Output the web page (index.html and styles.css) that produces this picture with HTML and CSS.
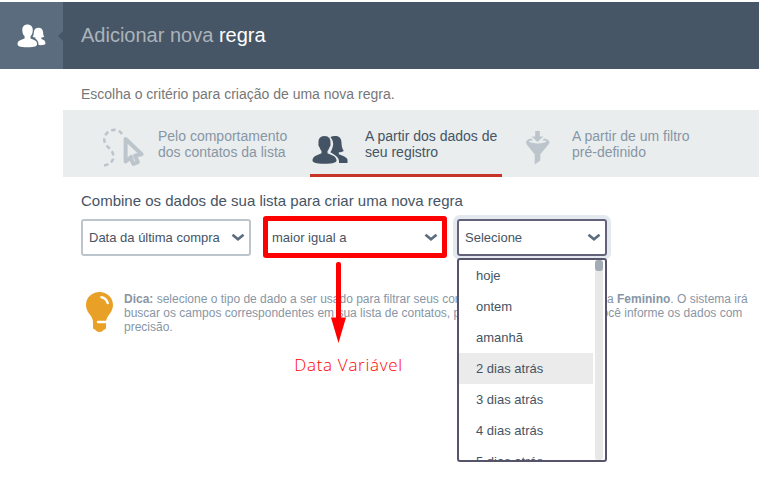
FILE: index.html
```html
<!DOCTYPE html>
<html lang="pt-BR">
<head>
    <meta charset="UTF-8">
    <meta name="viewport" content="width=device-width, initial-scale=1.0">
    <title>Adicionar nova regra</title>
    <link rel="stylesheet" href="styles.css">
</head>
<body>

    <header class="header">
        <div class="header-icon">
            <svg width="29" height="24" viewBox="0 0 29 24" fill="#fff">
                <path d="M21.500 3.800c-2.500 0-4.500 1.400-4.700 4.700-.1 2-.6 3.500-1.200 4.600l2.800.5v1.200c2.200 1.300 3 3 3.200 6.300 4.500.2 6.900-.5 6.900-1.600-.2-2.700-1.300-3.300-4.100-4.400v-1.600c1.300 0 2.200-.2 3-.7-1-1.100-1.200-2.300-1.300-4.500-.2-3.100-2.100-4.500-4.600-4.500z"/>
                <path stroke="#5a6c7d" stroke-width="1.200" paint-order="stroke" d="M10.500 .500C7.200 .500 5.300 2.700 5.300 5.900c0 3 .9 5 2.300 6.400v2.200C4 15.800.700 16.500.500 20c0 2 2 3.300 9.800 3.300s9.800-1.300 9.800-3.300c-.2-3.500-3-4.200-6.600-5.500v-2.200C14.900 10.900 15.800 8.900 15.800 5.900c0-3.200-2.100-5.400-5.300-5.400z"/>
            </svg>
        </div>
        <h1>Adicionar nova <span>regra</span></h1>
    </header>

    <p class="intro">Escolha o critério para criação de uma nova regra.</p>

    <!-- Criteria tabs -->
    <nav class="tabs">
        <a class="tab">
            <svg class="icon-cursor" width="42" height="40" viewBox="0 0 42 40" fill="none" stroke="#bdc5cc">
                <path stroke-width="2.600" stroke-dasharray="4.500 3.200" d="M19 6C15.500 .500 7.500 .700 3.600 5.500-.500 10.500 1.300 15.500 5 19c4 3.500 6.200 7 5.200 11.500-1 4-4.500 6.500-9.700 7"/>
                <path stroke-width="4" stroke-linejoin="round" d="M22.600 11v22.500l5-3.800 2.800 6.300 4.500-1.900-2.900-6.500 6.600-1.400z"/>
                <path stroke-width="2.400" d="M27.800 27l1.800 4"/>
            </svg>
            <span>Pelo comportamento<br>dos contatos da lista</span>
        </a>
        <a class="tab active">
            <svg class="icon-people" width="36" height="28" viewBox="0 0 36 28" fill="#455464">
                <path d="M18.500 1.200c1.500-1 3-1.200 5-1.200 4 0 5.800 2.500 6 6.500.1 4 .7 6 2.300 8.500-1.400 1-3 1.300-5 1.300v2c4.200 1.600 8.700 3.200 8.700 5.700v3h-8.500c.7-4.200-2.200-7-6.500-9.500-1.300-.7-2-1-2-1.500 1.300-1.500 1.600-3.400 2.300-5.500.9-2.500.3-6.500-2.300-9.300z"/>
                <path stroke="#e9edee" stroke-width="1.800" paint-order="stroke" d="M12.500 0C8 0 6.200 3 6.500 7c.1.900-.2 1.300 0 2.400.2 1 .8 1.200 1.100 2.200.4 1.600 1.200 2.600 1.900 3.300v2.300C5.500 19 1 20 .500 24c-.2 2.600 3 3.700 12 3.700s12.300-1.100 12-3.700C24 20 19.500 19 15.500 17.200v-2.300c.7-.7 1.500-1.700 1.900-3.300.3-1 .9-1.200 1.100-2.200.2-1.100-.1-1.500 0-2.400.3-4-1.500-7-6-7z"/>
            </svg>
            <span>A partir dos dados de<br>seu registro</span>
        </a>
        <a class="tab">
            <svg class="icon-funnel" width="24" height="34" viewBox="0 0 24 34" fill="#bdc5cc">
                <path d="M9.200 0h4.600v5.400h3.500L11.500 11 5.700 5.400h3.500z"/>
                <path d="M5.400 7.500C2.200 8.200 0 9.400 0 11c0 1.500 1.500 3.500 3.500 6l5.200 6.200v10.300l5.600-3.900v-6.400l5.200-6.200c2-2.500 4-4.500 4-6 0-1.600-2.200-2.800-5.400-3.500l-1.800 1.700c2.300.3 4 .8 4.400 1.400-1 1-4.500 1.800-9 1.800s-8-.8-9-1.800c.4-.6 2.100-1.100 4.400-1.400z"/>
            </svg>
            <span>A partir de um filtro<br>pré-definido</span>
        </a>
    </nav>

    <main class="content">
        <h2>Combine os dados de sua lista para criar uma nova regra</h2>

        <div class="fields">
            <div class="select">
                <span>Data da última compra</span>
                <svg class="chevron" width="14" height="9" viewBox="0 0 14 9"><path d="M1.500 1.800L7 6.300l5.500-4.500"/></svg>
            </div>
            <div class="select marked">
                <span>maior igual a</span>
                <svg class="chevron" width="14" height="9" viewBox="0 0 14 9"><path d="M1.500 1.800L7 6.300l5.500-4.500"/></svg>
                <div class="note">
                    <svg width="17" height="82" viewBox="0 0 17 82" fill="#f00">
                        <rect x="6" y="0" width="5" height="60" rx="2"/>
                        <path d="M1 55.500h15L8.500 81z"/>
                    </svg>
                    <span>Data Variável</span>
                </div>
            </div>
            <div class="select focused">
                <span>Selecione</span>
                <svg class="chevron" width="14" height="9" viewBox="0 0 14 9"><path d="M1.500 1.800L7 6.300l5.500-4.500"/></svg>
                <div class="dropdown">
                    <ul>
                        <li>hoje</li>
                        <li>ontem</li>
                        <li>amanhã</li>
                        <li class="hover">2 dias atrás</li>
                        <li>3 dias atrás</li>
                        <li>4 dias atrás</li>
                        <li>5 dias atrás</li>
                    </ul>
                    <div class="scrollbar"><div class="thumb"></div></div>
                </div>
            </div>
        </div>

        <div class="tip">
            <svg width="28" height="41" viewBox="0 0 28 41">
                <path fill="#e8a026" d="M13.500 0C6 0 0 5.500 0 13c0 4 1.700 6.800 3.800 9.500C6 25.500 7 27.500 7 31v4.500c0 1.500 1 2 2.300 2.300C10.300 39.500 11.700 40 13.500 40s3.200-.5 4.200-2.200c1.300-.3 2.300-.8 2.300-2.300V31c0-3.500 1-5.500 3.200-8.500C25.300 19.800 27 17 27 13 27 5.500 21 0 13.500 0z"/>
                <path fill="none" stroke="#fff" stroke-width="2.500" stroke-linecap="round" d="M15.500 5.200c3.200.6 5.300 2.700 6.200 5.800M12 30h8.500"/>
            </svg>
            <p><b>Dica:</b> selecione o tipo de dado a ser usado para filtrar seus contatos. Exemplo: Sexo igual a <b>Feminino</b>. O sistema irá<br>buscar os campos correspondentes em sua lista de contatos, por isso, é importante que você informe os dados com<br>precisão.</p>
        </div>
    </main>

</body>
</html>
```
FILE: styles.css
```css
body {
    margin: 0;
    padding-top: 2px;
    min-height: 498px;
    box-sizing: border-box;
    background-color: #fff;
    font-family: "Liberation Sans", Arial, sans-serif;
    color: #455464;
}

h1, h2, p, ul {
    margin: 0;
    padding: 0;
    font-weight: normal;
}

.header {
    display: flex;
    height: 67px;
    background-color: #475666;
}

.header-icon {
    position: relative;
    display: flex;
    align-items: center;
    justify-content: center;
    width: 63px;
    background-color: #5a6c7d;
}

.header-icon::after {
    content: "";
    position: absolute;
    right: 0;
    top: 29px;
    border: 5px solid transparent;
    border-left: none;
    border-right-color: #475666;
}

.header h1 {
    padding-left: 18px;
    font-size: 20px;
    line-height: 66px;
    color: #abb3ba;
}

.header h1 span {
    color: #fff;
}

.intro {
    padding: 16px 0 0 81px;
    height: 25px;
    font-size: 14px;
    line-height: 18px;
    color: #777;
}

/* Tabs */
.tabs {
    display: grid;
    grid-template-columns: 192px 192px 1fr;
    column-gap: 15px;
    height: 67px;
    margin-left: 63px;
    padding-left: 40px;
    background-color: #e9edee;
    box-sizing: border-box;
}

.tab {
    display: grid;
    grid-template-columns: 55px 1fr;
    align-items: start;
    padding-top: 18px;
    height: 67px;
    box-sizing: border-box;
    font-size: 14px;
    line-height: 16px;
    color: #8896a5;
    white-space: nowrap;
}

.tab.active {
    border-bottom: 3px solid #c63527;
    color: #455464;
}

.icon-people {
    margin: 8px 0 0 2px;
}

.icon-funnel {
    margin: 3px 0 0 9px;
}

.content {
    padding-left: 81px;
}

.content h2 {
    padding-top: 15px;
    height: 27px;
    font-size: 15px;
    line-height: 18px;
}

/* Fields */
.fields {
    display: flex;
}

.select {
    position: relative;
    display: flex;
    align-items: center;
    justify-content: space-between;
    width: 170px;
    height: 37px;
    padding: 0 4px 0 6px;
    border: 2px solid #bdc5cc;
    border-radius: 3px;
    box-sizing: border-box;
    font-size: 13px;
}

.chevron {
    fill: none;
    stroke: #5a6c7d;
    stroke-width: 2.6;
}

.select.marked {
    width: 184px;
    height: 42px;
    margin: -3px 0 -2px 12px;
    padding: 0 4px;
    border: 5px solid #f00;
}

.select.focused {
    width: 150px;
    margin-left: 10px;
    border-color: #62627a;
    box-shadow: 0 0 0 4px #e4e9ef;
}

.note {
    position: absolute;
    left: 0;
    right: 0;
    top: 41px;
    z-index: 1;
    text-align: center;
    color: #f00;
}

.note svg {
    display: block;
    margin-left: 62px;
}

.note span {
    display: block;
    width: 161px;
    margin-top: 9px;
    font-family: "Open Sans", "Noto Sans", sans-serif;
    font-size: 17px;
    font-weight: 300;
    letter-spacing: 0.7px;
    line-height: 24px;
}

.dropdown {
    position: absolute;
    left: -2px;
    top: 37px;
    z-index: 2;
    display: flex;
    justify-content: space-between;
    width: 150px;
    height: 204px;
    padding-right: 2px;
    border: 2px solid #55546a;
    border-radius: 3px;
    box-sizing: border-box;
    background-color: #fff;
    overflow: hidden;
}

.dropdown ul {
    width: 134px;
    list-style: none;
}

.dropdown li {
    height: 31px;
    padding-left: 17px;
    line-height: 31px;
}

.dropdown li.hover {
    background-color: #ebebeb;
}

.scrollbar {
    width: 8px;
    background-color: #e8e8e8;
    border-radius: 3px;
}

.thumb {
    height: 11px;
    background-color: #a3acb5;
    border-radius: 3px;
}

/* Tip */
.tip {
    display: flex;
    gap: 10px;
    padding: 36px 0 0 5px;
    font-size: 12px;
    line-height: 14px;
    color: #8896a5;
    white-space: nowrap;
}
```
